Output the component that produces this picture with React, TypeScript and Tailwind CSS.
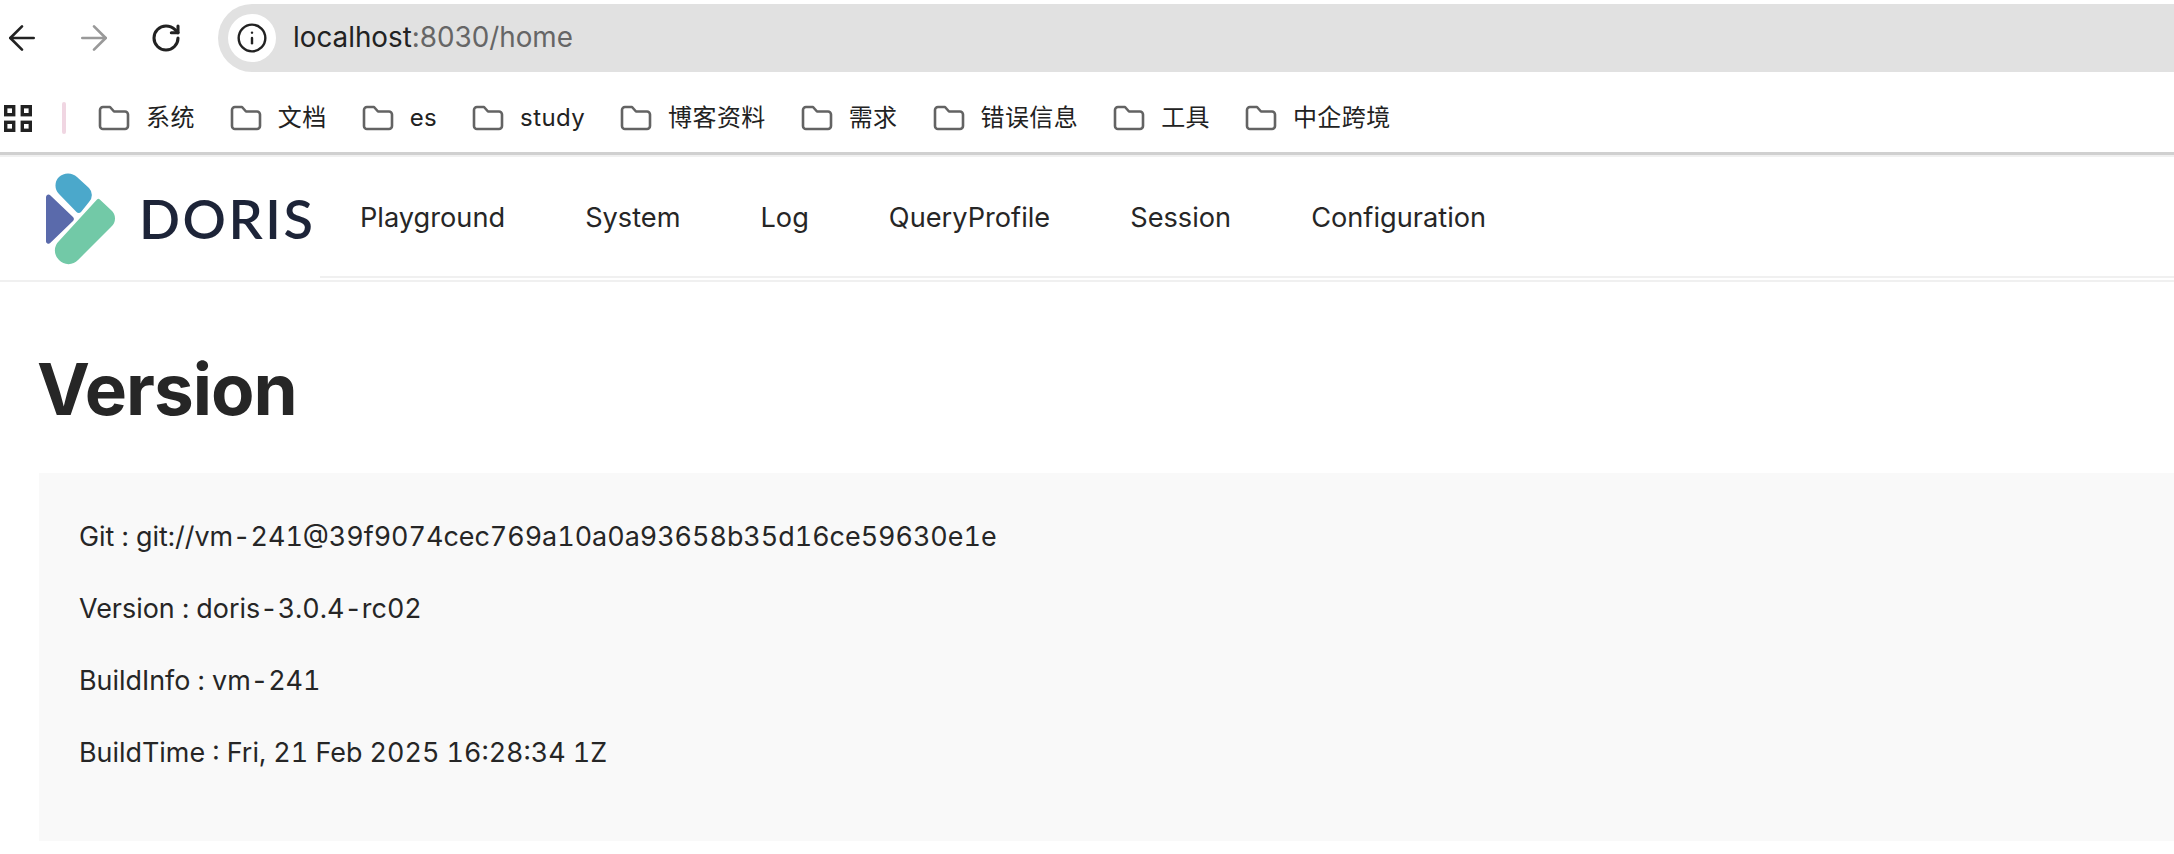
import React from 'react';
import { ArrowLeft, ArrowRight, RotateCw, Info } from 'lucide-react';

const bookmarks = ['系统', '文档', 'es', 'study', '博客资料', '需求', '错误信息', '工具', '中企跨境'];
const navItems = ['Playground', 'System', 'Log', 'QueryProfile', 'Session', 'Configuration'];
const versionRows = [
  'Git : git://vm-241@39f9074cec769a10a0a93658b35d16ce59630e1e',
  'Version : doris-3.0.4-rc02',
  'BuildInfo : vm-241',
  'BuildTime : Fri, 21 Feb 2025 16:28:34 1Z',
];

const FolderIcon = () => (
  <svg width="32" height="26" viewBox="0 0 32 26" fill="none" className="shrink-0">
    <path
      d="M2 5a3 3 0 0 1 3-3h7l4 4.5h11a3 3 0 0 1 3 3V21a3 3 0 0 1-3 3H5a3 3 0 0 1-3-3V5z"
      stroke="#636363"
      strokeWidth="2.6"
      strokeLinejoin="round"
    />
  </svg>
);

const AppsIcon = () => (
  <svg width="28" height="27" viewBox="0 0 28 27" fill="none" stroke="#222" strokeWidth="3.4" className="ml-[4px] shrink-0">
    <rect x="1.7" y="1.7" width="8" height="8" />
    <rect x="18.3" y="1.7" width="8" height="8" />
    <rect x="1.7" y="17.3" width="8" height="8" />
    <rect x="18.3" y="17.3" width="8" height="8" />
  </svg>
);

const DorisLogo = () => (
  <svg width="74" height="94" viewBox="0 0 74 94" className="shrink-0">
    <path d="M0 25a2.5 2.5 0 0 1 4.2-1.8L27 45a3 3 0 0 1 0 4L4.2 71A2.5 2.5 0 0 1 0 69V25z" fill="#5a6aab" />
    <path d="M13 5a13 13 0 0 1 18 0L43 16a10 10 0 0 1 0 14L35 40a3 3 0 0 1-4.5 0L13 22a12 12 0 0 1 0-17z" fill="#4ba8cb" />
    <path d="M51 27.5a2 2 0 0 1 2.8 0L65 38a11 11 0 0 1 0 17L32 88a13 13 0 0 1-19 0a13 13 0 0 1 0-19L51 27.5z" fill="#72c9a7" />
  </svg>
);

export default function App() {
  return (
    <div className="h-[854px] overflow-hidden bg-white font-['Inter',sans-serif] text-[#262626]">
      {/* browser toolbar */}
      <div className="flex h-[72px] items-end">
        <div className="flex h-[72px] w-[218px] shrink-0 items-center pt-[4px]">
          <ArrowLeft size={40} strokeWidth={1.6} className="ml-[2px] text-[#222]" />
          <ArrowRight size={40} strokeWidth={1.6} className="ml-[32px] text-[#999]" />
          <RotateCw size={32} strokeWidth={2.3} className="ml-[36px] text-[#222]" />
        </div>
        <div className="flex h-[68px] flex-1 items-center rounded-l-[34px] bg-[#e1e1e1] pl-[10px]">
          <div className="flex h-[48px] w-[48px] items-center justify-center rounded-full bg-white">
            <Info size={32} strokeWidth={1.8} className="text-[#222]" />
          </div>
          <span className="ml-[17px] text-[27.8px] text-[#222]">
            localhost<span className="text-[#666]">:8030/home</span>
          </span>
        </div>
      </div>

      {/* bookmarks bar */}
      <div className="flex h-[83px] items-center border-b-[3px] border-[#d0d0d0] pt-[12px]">
        <AppsIcon />
        <div className="ml-[30px] h-[32px] w-[4px] rounded-full bg-[#f0d6e2]" />
        <div className="ml-[32px] flex items-center gap-[35px]">
          {bookmarks.map((name) => (
            <div key={name} className="flex items-center gap-[16px]">
              <FolderIcon />
              <span className="font-['Inter','Noto_Sans_CJK_SC',sans-serif] text-[24px] tracking-[0.4px] text-[#222]">{name}</span>
            </div>
          ))}
        </div>
      </div>

      {/* app header */}
      <div className="flex h-[127px] border-t-[2px] border-b-[2px] border-[#f0f0f0]">
        <div className="flex w-[320px] shrink-0 items-center pl-[46px]">
          <DorisLogo />
          <span className="ml-[19px] font-['Lato',sans-serif] text-[54px] font-semibold leading-none tracking-[2.5px] text-[#1d2438]">
            DORIS
          </span>
        </div>
        <nav className="mb-[2px] flex flex-1 items-center gap-[80px] border-b-2 border-[#f0f0f0] pl-[40px] pt-[3px]">
          {navItems.map((item) => (
            <span key={item} className="text-[27.2px]">
              {item}
            </span>
          ))}
        </nav>
      </div>

      {/* page content */}
      <main className="pl-[39px]">
        <h1 className="-ml-[2px] pt-[64px] text-[71px] font-bold leading-[86px] tracking-[-1px] text-[#262626]">Version</h1>
        <div className="mt-[41px] h-[368px] bg-[#f9f9f9] pl-[40px] pt-[43px]">
          {versionRows.map((row) => (
            <p key={row} className="h-[72px] text-[26.9px] leading-[40px] tabular-nums">
              {row}
            </p>
          ))}
        </div>
      </main>
    </div>
  );
}
